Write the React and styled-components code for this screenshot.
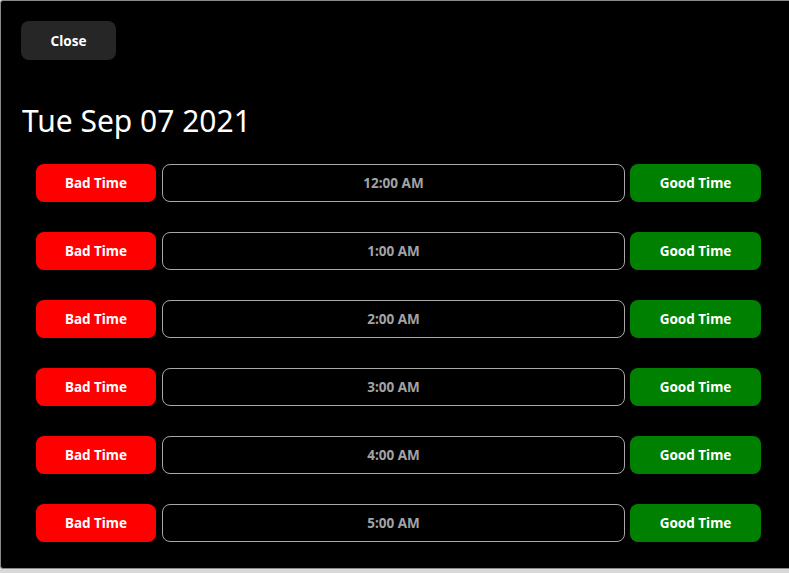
import React from "react";
import styled, { createGlobalStyle } from "styled-components";

const Global = createGlobalStyle`
  html, body {
    margin: 0;
    padding: 0;
    background: #d9d9d9;
    overflow: hidden;
  }
  body {
    font-family: "Noto Sans", "Open Sans", sans-serif;
  }
`;

const Modal = styled.div`
  box-sizing: border-box;
  width: 820px;
  height: 569px;
  background: #000;
  border: 1px solid #8a8a8a;
  border-radius: 3px;
  padding: 20px 20px 0 20px;
  display: flex;
  flex-direction: column;
  align-items: flex-start;
`;

const CloseButton = styled.button`
  width: 95px;
  height: 39px;
  padding-top: 2px;
  border: none;
  border-radius: 8px;
  background: #262626;
  color: #fff;
  font-family: inherit;
  font-weight: 700;
  font-size: 13.5px;
  cursor: pointer;
`;

const Title = styled.h1`
  margin: 41px 0 0 1px;
  font-weight: 400;
  font-size: 30px;
  line-height: 40px;
  color: #fff;
`;

const Rows = styled.div`
  margin: 23px 0 0 15px;
  width: 725px;
  display: flex;
  flex-direction: column;
  gap: 30px;
`;

const Row = styled.div`
  display: grid;
  grid-template-columns: 120px 1fr 131px;
  column-gap: 5px;
  height: 38px;
`;

const ActionButton = styled.button`
  border: none;
  border-radius: 8px;
  background: ${(p) => (p.$good ? "#008000" : "#ff0000")};
  color: #fff;
  font-family: inherit;
  font-weight: 700;
  font-size: 13.5px;
  cursor: pointer;
`;

const TimeBox = styled.div`
  box-sizing: border-box;
  margin-left: 1px;
  border: 1px solid #a8a8a8;
  border-radius: 8px;
  display: flex;
  align-items: center;
  justify-content: center;
  color: #a3a3a3;
  font-weight: 700;
  font-size: 13.5px;
`;

const times = ["12:00 AM", "1:00 AM", "2:00 AM", "3:00 AM", "4:00 AM", "5:00 AM"];

export default function App() {
  return (
    <>
      <Global />
      <Modal>
        <CloseButton>Close</CloseButton>
        <Title>Tue Sep 07 2021</Title>
        <Rows>
          {times.map((t) => (
            <Row key={t}>
              <ActionButton>Bad Time</ActionButton>
              <TimeBox>{t}</TimeBox>
              <ActionButton $good>Good Time</ActionButton>
            </Row>
          ))}
        </Rows>
      </Modal>
    </>
  );
}
